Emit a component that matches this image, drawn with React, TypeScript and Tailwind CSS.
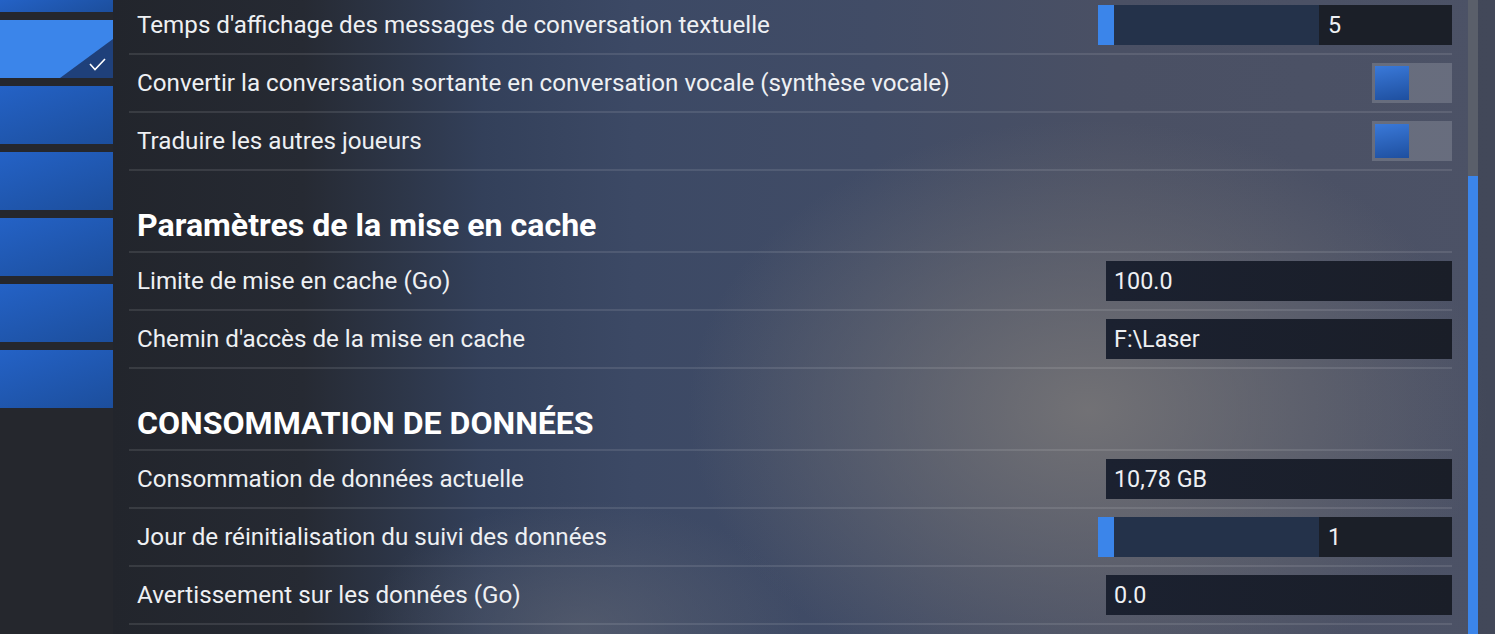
import React from "react";

const font = { fontFamily: "Roboto, 'Noto Sans', 'Liberation Sans', sans-serif" };

function Tile({ selected = false, h = "h-[58px]" }: { selected?: boolean; h?: string }) {
  if (selected) {
    return (
      <div className={`relative ${h} w-full shrink-0 bg-[#3b85ea]`}>
        <svg className="absolute left-0 top-0" width="113" height="58" viewBox="0 0 113 58">
          <polygon points="60,58 113,58 113,19" fill="#1f407a" />
          <polyline points="90,44 95,49.5 105,39" fill="none" stroke="#ffffff" strokeWidth="1.6" />
        </svg>
      </div>
    );
  }
  return <div className={`${h} w-full shrink-0 bg-[linear-gradient(160deg,#2462c6_0%,#1c4e9c_100%)]`} />;
}

function Row({ label, children }: { label: string; children?: React.ReactNode }) {
  return (
    <div className="flex h-[58px] items-center justify-between border-b-2 border-[rgba(255,255,255,0.1)] pl-2">
      <span className="pt-[1px] text-[24.2px] text-[#eef0f3]">{label}</span>
      {children}
    </div>
  );
}

function Header({ title }: { title: string }) {
  return (
    <div className="h-[82px] border-b-2 border-[rgba(255,255,255,0.1)] pl-2 pt-[36px]">
      <div className="h-[36px] text-[32.1px] font-bold leading-[36px] text-white">{title}</div>
    </div>
  );
}

function Slider({ value }: { value: string }) {
  return (
    <div className="flex h-[40px] w-[354px]">
      <div className="w-[16px] bg-[#3b85ea]" />
      <div className="w-[205px] bg-[#24324a]" />
      <div className="flex flex-1 items-center bg-[#1b1f28] pl-[9px] text-[23.3px] text-[#eef0f3]">{value}</div>
    </div>
  );
}

function Input({ value }: { value: string }) {
  return (
    <div className="flex h-[40px] w-[346px] items-center bg-[linear-gradient(90deg,#1b2130,#1a1e28)] pl-[8px] text-[23.3px] text-[#eef0f3]">
      {value}
    </div>
  );
}

function Toggle() {
  return (
    <div className="flex h-[40px] w-[80px] items-center bg-[rgba(255,255,255,0.16)] pl-[3px]">
      <div className="h-[34px] w-[34px] bg-[linear-gradient(170deg,#3a79d9_0%,#1e4f9f_100%)]" />
    </div>
  );
}

export default function App() {
  return (
    <div className="flex h-[634px] w-[1495px] overflow-hidden bg-[#25272d]" style={font}>
      <div className="flex w-[113px] shrink-0 flex-col gap-2 bg-[#25272d]">
        <Tile h="h-[12px]" />
        <Tile selected />
        <Tile />
        <Tile />
        <Tile />
        <Tile />
        <Tile />
      </div>
      <div className="flex flex-1 [background-image:radial-gradient(ellipse_400px_290px_at_975px_410px,rgba(116,115,118,0.95),rgba(116,115,118,0)_100%),radial-gradient(ellipse_220px_130px_at_470px_630px,rgba(100,104,116,0.55),rgba(100,104,116,0)_100%),linear-gradient(90deg,#22252c_0px,#262a33_190px,#33405a_370px,#3c4965_520px,#414c66_760px,#4a5064_1000px,#4c5266_1382px)]">
        <div className="ml-[16px] w-[1323px] shrink-0">
          <div className="-mt-[3px]">
            <Row label="Temps d'affichage des messages de conversation textuelle">
              <Slider value="5" />
            </Row>
            <Row label="Convertir la conversation sortante en conversation vocale (synthèse vocale)">
              <Toggle />
            </Row>
            <Row label="Traduire les autres joueurs">
              <Toggle />
            </Row>
            <Header title="Paramètres de la mise en cache" />
            <Row label="Limite de mise en cache (Go)">
              <Input value="100.0" />
            </Row>
            <Row label="Chemin d'accès de la mise en cache">
              <Input value="F:\Laser" />
            </Row>
            <Header title="CONSOMMATION DE DONNÉES" />
            <Row label="Consommation de données actuelle">
              <Input value="10,78 GB" />
            </Row>
            <Row label="Jour de réinitialisation du suivi des données">
              <Slider value="1" />
            </Row>
            <Row label="Avertissement sur les données (Go)">
              <Input value="0.0" />
            </Row>
          </div>
        </div>
        <div className="w-[16px] shrink-0" />
        <div className="flex w-[10px] shrink-0 flex-col">
          <div className="h-[176px] bg-[#5a5f6a]" />
          <div className="flex-1 bg-[#3b85ea]" />
        </div>
        <div className="w-[17px] shrink-0 bg-[rgba(20,25,35,0.18)]" />
      </div>
    </div>
  );
}
